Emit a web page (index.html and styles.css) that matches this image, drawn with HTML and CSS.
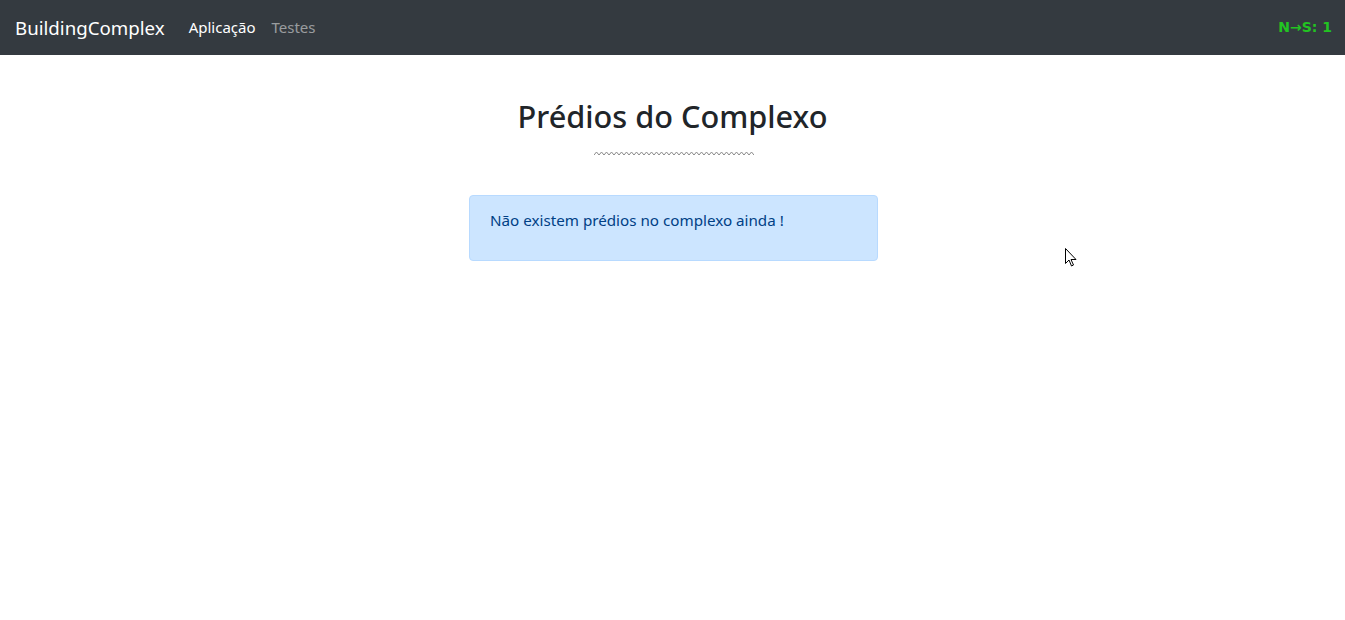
FILE: index.html
```html
<!DOCTYPE html>
<html lang="pt">
<head>
<meta charset="utf-8">
<title>BuildingComplex</title>
<link rel="stylesheet" href="styles.css">
</head>
<body>
<nav class="navbar">
  <a class="brand" href="#">BuildingComplex</a>
  <ul class="nav-links">
    <li><a class="nav-link active" href="#">Aplicação</a></li>
    <li><a class="nav-link" href="#">Testes</a></li>
  </ul>
  <span class="status">N→S: 1</span>
</nav>
<main class="content">
  <h2 class="title">Prédios do Complexo</h2>
  <svg class="wave" width="160" height="5" viewBox="0 0 160 5">
    <polyline fill="none" stroke="#8a8a8a" stroke-width="1" points="0,4 2.5,1 5,4 7.5,1 10,4 12.5,1 15,4 17.5,1 20,4 22.5,1 25,4 27.5,1 30,4 32.5,1 35,4 37.5,1 40,4 42.5,1 45,4 47.5,1 50,4 52.5,1 55,4 57.5,1 60,4 62.5,1 65,4 67.5,1 70,4 72.5,1 75,4 77.5,1 80,4 82.5,1 85,4 87.5,1 90,4 92.5,1 95,4 97.5,1 100,4 102.5,1 105,4 107.5,1 110,4 112.5,1 115,4 117.5,1 120,4 122.5,1 125,4 127.5,1 130,4 132.5,1 135,4 137.5,1 140,4 142.5,1 145,4 147.5,1 150,4 152.5,1 155,4 157.5,1 160,4"/>
  </svg>
  <div class="alert">
    <p>Não existem prédios no complexo ainda !</p>
  </div>
</main>
<svg class="cursor" width="12" height="20" viewBox="0 0 12 20">
  <path d="M0.5,0.5 L0.5,15.5 L4,12 L6.5,18 L8.5,17 L6,11.5 L11,11.5 Z" fill="#fff" stroke="#000" stroke-width="1" stroke-linejoin="miter"/>
</svg>
</body>
</html>
```
FILE: styles.css
```css
* { box-sizing: border-box; }
html, body { margin: 0; padding: 0; }
body {
  font-family: "Segoe UI", "Noto Sans", "Open Sans", sans-serif;
  font-size: 16px;
  line-height: 1.5;
  color: #212529;
  background: #fff;
  position: relative;
  min-height: 620px;
}
.navbar {
  display: flex;
  align-items: center;
  height: 55px;
  padding: 0 13px 0 15px;
  background: #343a40;
}
.brand {
  font-size: 18.7px;
  color: #fff;
  text-decoration: none;
  margin-right: 16px;
  line-height: 30px;
}
.nav-links {
  display: flex;
  list-style: none;
  margin: 0;
  padding: 0;
  flex: 1;
}
.nav-link {
  display: block;
  padding: 8px 8px;
  font-size: 15px;
  color: rgba(255,255,255,0.5);
  text-decoration: none;
}
.nav-link.active { color: #fff; }
.status {
  font-family: "DejaVu Sans", sans-serif;
  font-weight: bold;
  font-size: 14px;
  color: #22c322;
}
.content {
  display: flex;
  flex-direction: column;
  align-items: center;
  padding-top: 40px;
}
.title {
  margin: 0;
  font-size: 30.7px;
  font-weight: 500;
  line-height: 42px;
}
.wave {
  display: block;
  margin-top: 14px;
  margin-left: 2px;
}
.alert {
  margin-top: 39px;
  margin-left: 2px;
  width: 409px;
  padding: 13px 20px 12px;
  background: #cce5ff;
  border: 1px solid #b8daff;
  border-radius: 4px;
  color: #004085;
}
.alert p {
  margin: 0 0 16px;
  font-size: 15.2px;
}
.cursor {
  position: absolute;
  left: 1065px;
  top: 248px;
}
```
